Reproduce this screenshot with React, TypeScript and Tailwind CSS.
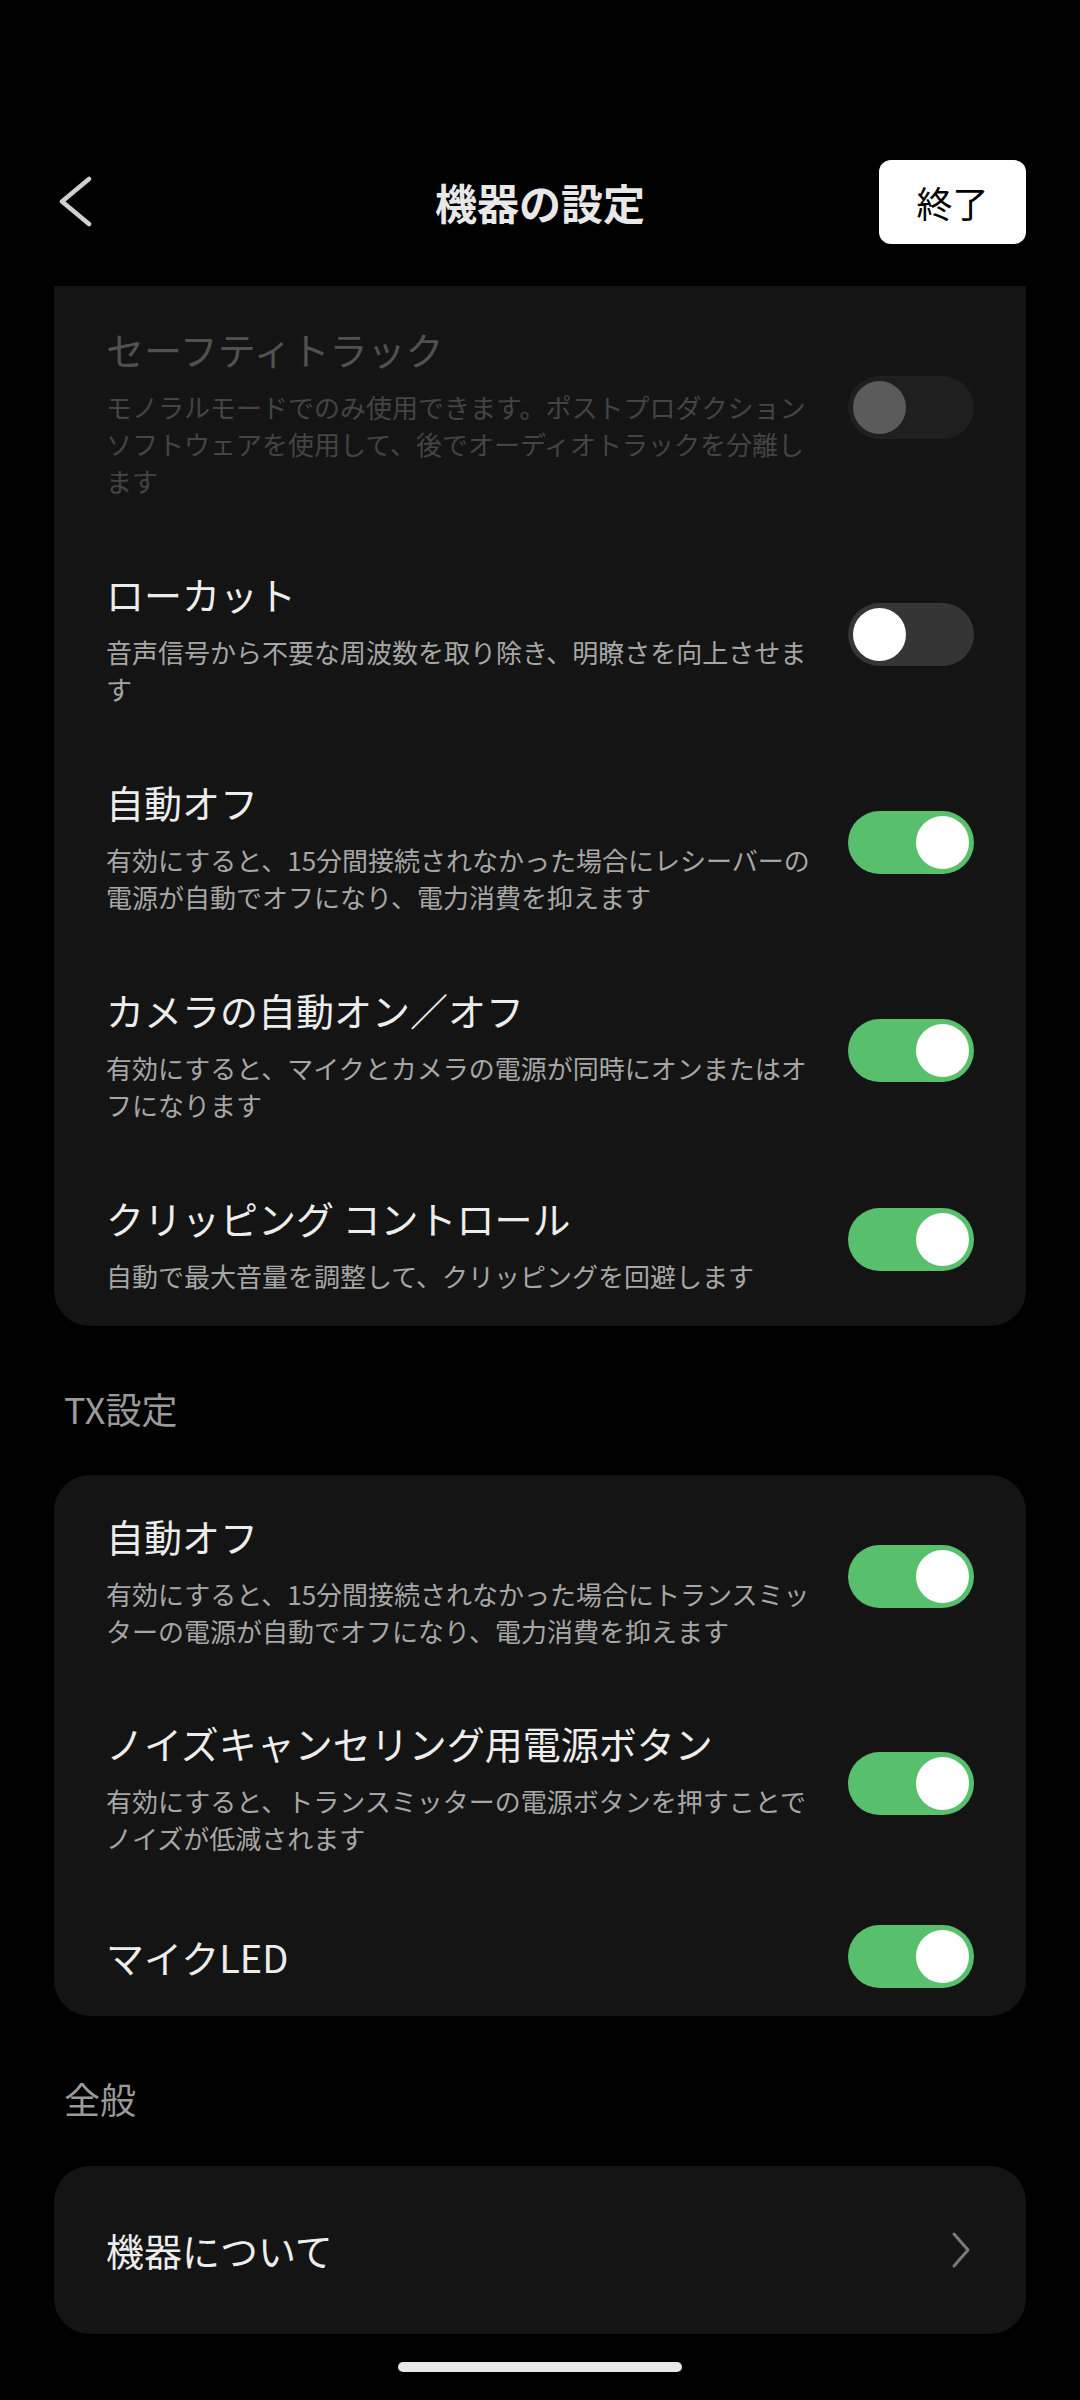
import React from "react";

// TYPES
type ToggleProps = {
  on?: boolean;
  disabled?: boolean;
  lift?: boolean;
};

type RowProps = {
  title: string;
  desc?: string;
  on?: boolean;
  disabled?: boolean;
};

const Toggle = ({ on, disabled, lift }: ToggleProps) => {
  const track = on
    ? "bg-[#58bf6c] justify-end"
    : disabled
    ? "bg-[#1f1f1f] justify-start"
    : "bg-[#353535] justify-start";
  return (
    <div
      className={`flex items-center shrink-0 w-[126px] h-[63px] rounded-full px-[5px] ${track} ${
        lift ? "mb-[8px]" : ""
      }`}
    >
      <div
        className={`w-[53px] h-[53px] rounded-full ${
          disabled ? "bg-[#5b5b5b]" : "bg-white"
        }`}
      />
    </div>
  );
};

const Row = ({ title, desc, on, disabled }: RowProps) => {
  return (
    <div className="flex items-center">
      <div className="flex-1 pr-[26px]">
        <div
          className={`text-[38px] leading-[50px] ${
            disabled ? "text-[#515151]" : "text-[#ededed]"
          }`}
        >
          {title}
        </div>
        {desc && (
          <div
            className={`mt-[14px] text-[26px] leading-[37px] ${
              disabled ? "text-[#444444]" : "text-[#a6a6a6]"
            }`}
          >
            {desc}
          </div>
        )}
      </div>
      <Toggle on={on} disabled={disabled} lift={!!desc} />
    </div>
  );
};

const SectionLabel = ({ label }: { label: string }) => (
  <div className="pl-[64px] text-[36px] leading-[50px] text-[#9a9a9a]">{label}</div>
);

const App = () => {
  return (
    <div className="w-[1080px] h-[2400px] bg-black flex flex-col font-['Noto_Sans_CJK_JP','Noto_Sans',sans-serif] overflow-hidden">
      {/* HEADER */}
      <div className="mt-[160px] h-[84px] grid grid-cols-[1fr_auto_1fr] items-center">
        <div className="flex items-center pl-[58px]">
          <svg width="36" height="52" viewBox="0 0 36 52" fill="none">
            <path
              d="M31 3 L4 25.5 L31 48"
              stroke="#d0d0d0"
              strokeWidth="4.5"
              strokeLinecap="round"
              strokeLinejoin="round"
            />
          </svg>
        </div>
        <div className="text-[42px] font-bold leading-none text-[#e8e8e8]">機器の設定</div>
        <div className="flex justify-end pr-[54px]">
          <button className="w-[147px] h-[84px] rounded-[12px] bg-white text-black text-[36px] leading-none">
            終了
          </button>
        </div>
      </div>

      {/* RX CARD (scrolled) */}
      <div className="mt-[42px] mx-[54px] bg-[#141414] rounded-b-[36px] px-[52px] pt-[38px] pb-[32px] flex flex-col gap-[70px]">
        <Row
          title="セーフティトラック"
          desc="モノラルモードでのみ使用できます。ポストプロダクションソフトウェアを使用して、後でオーディオトラックを分離します"
          disabled
        />
        <Row title="ローカット" desc="音声信号から不要な周波数を取り除き、明瞭さを向上させます" />
        <Row
          title="自動オフ"
          desc="有効にすると、15分間接続されなかった場合にレシーバーの電源が自動でオフになり、電力消費を抑えます"
          on
        />
        <Row
          title="カメラの自動オン／オフ"
          desc="有効にすると、マイクとカメラの電源が同時にオンまたはオフになります"
          on
        />
        <Row title="クリッピング コントロール" desc="自動で最大音量を調整して、クリッピングを回避します" on />
      </div>

      {/* TX SETTINGS */}
      <div className="mt-[57px]">
        <SectionLabel label="TX設定" />
      </div>
      <div className="mt-[42px] mx-[54px] bg-[#141414] rounded-[36px] px-[52px] pt-[36px] pb-[28px] flex flex-col gap-[69px]">
        <Row
          title="自動オフ"
          desc="有効にすると、15分間接続されなかった場合にトランスミッターの電源が自動でオフになり、電力消費を抑えます"
          on
        />
        <Row
          title="ノイズキャンセリング用電源ボタン"
          desc="有効にすると、トランスミッターの電源ボタンを押すことでノイズが低減されます"
          on
        />
        <Row title="マイクLED" on />
      </div>

      {/* GENERAL */}
      <div className="mt-[57px]">
        <SectionLabel label="全般" />
      </div>
      <div className="mt-[43px] mx-[54px] h-[168px] bg-[#141414] rounded-[36px] pl-[52px] pr-[54px] flex items-center justify-between">
        <div className="text-[38px] leading-[50px] text-[#ededed]">機器について</div>
        <svg width="24" height="40" viewBox="0 0 24 40" fill="none">
          <path
            d="M6 4 L20 20 L6 36"
            stroke="#7a7a7a"
            strokeWidth="3"
            strokeLinecap="round"
            strokeLinejoin="round"
          />
        </svg>
      </div>

      {/* HOME INDICATOR */}
      <div className="mt-[28px] mx-auto w-[284px] h-[10px] rounded-full bg-[#e8e8e8]" />
    </div>
  );
};

export default App;
